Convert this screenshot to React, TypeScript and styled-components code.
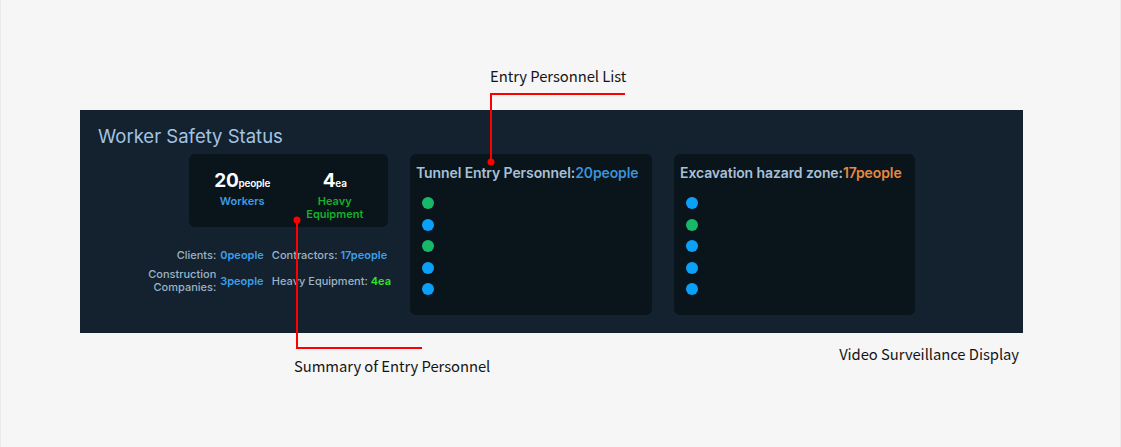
import React from "react";
import styled, { createGlobalStyle } from "styled-components";

const GlobalStyle = createGlobalStyle`
  html, body {
    margin: 0;
    padding: 0;
    background: #f6f6f6;
  }
`;

const Frame = styled.div`
  position: relative;
  width: 1121px;
  height: 447px;
  box-sizing: border-box;
  padding: 110px 0 0 80px;
  background: #f6f6f6;
  border-left: 1px solid #ebebeb;
  border-right: 1px solid #ebebeb;
  overflow: hidden;
`;

const Panel = styled.div`
  width: 943px;
  height: 223px;
  box-sizing: border-box;
  margin-left: -1px;
  padding: 15px 0 0 18px;
  background: #13222e;
  font-family: Inter, "Noto Sans", sans-serif;
`;

const PanelTitle = styled.div`
  font-size: 18.5px;
  line-height: 22px;
  font-weight: 400;
  color: #a3c4e2;
`;

const Row = styled.div`
  display: flex;
  gap: 22px;
  margin-top: 7px;
  padding-left: 91px;
`;

const LeftColumn = styled.div`
  width: 199px;
  display: flex;
  flex-direction: column;
  align-items: flex-end;
`;

const SummaryCard = styled.div`
  width: 199px;
  height: 73px;
  box-sizing: border-box;
  padding: 17px 7px 0;
  background: #0a141b;
  border-radius: 6px;
  display: grid;
  grid-template-columns: 1fr 1fr;
`;

const Metric = styled.div`
  display: flex;
  flex-direction: column;
  align-items: center;
  text-align: center;
`;

const MetricValue = styled.div`
  color: #ffffff;
  font-size: 19px;
  line-height: 20px;
  font-weight: 700;
  letter-spacing: -0.3px;
  small {
    font-size: 10px;
    font-weight: 600;
    letter-spacing: -0.2px;
  }
`;

const MetricLabel = styled.div<{ $tone: string }>`
  margin-top: 2px;
  color: ${(p) => p.$tone};
  font-size: 11px;
  line-height: 13px;
  font-weight: 600;
`;

const Stats = styled.div`
  margin-top: 22px;
  margin-right: -3px;
  display: grid;
  grid-template-columns: 72px auto auto;
  column-gap: 4px;
  row-gap: 6px;
  align-items: center;
  font-size: 11px;
  line-height: 13px;
  font-weight: 500;
  color: #9cb2c6;
  white-space: nowrap;
`;

const StatLabel = styled.div`
  text-align: right;
  white-space: normal;
`;

const StatValue = styled.span<{ $tone: string }>`
  color: ${(p) => p.$tone};
  font-weight: 600;
`;

const StatPair = styled.div`
  padding-left: 4px;
`;

const ListCard = styled.div<{ $width: number }>`
  width: ${(p) => p.$width}px;
  height: 161px;
  box-sizing: border-box;
  padding: 11px 6px 0;
  background: #0a141b;
  border-radius: 6px;
`;

const ListTitle = styled.div`
  font-size: 14px;
  line-height: 16px;
  font-weight: 600;
  color: #a7c0d8;
  letter-spacing: -0.1px;
  white-space: nowrap;
`;

const ListCount = styled.span<{ $tone: string }>`
  color: ${(p) => p.$tone};
`;

const DotList = styled.div`
  margin-top: 16px;
  padding-left: 6px;
  display: flex;
  flex-direction: column;
  gap: 9.5px;
`;

const Dot = styled.span<{ $tone: string }>`
  display: block;
  width: 12px;
  height: 12px;
  border-radius: 50%;
  background: ${(p) => p.$tone};
`;

const Caption = styled.div`
  width: 938px;
  margin-top: 11px;
  text-align: right;
  font-family: "Noto Sans CJK KR", "Noto Sans", sans-serif;
  font-size: 14.8px;
  line-height: 20px;
  color: #151515;
  letter-spacing: -0.05px;
`;

const Note = styled.div<{ $x: number; $y: number }>`
  position: absolute;
  left: ${(p) => p.$x}px;
  top: ${(p) => p.$y}px;
  font-family: "Noto Sans CJK KR", "Noto Sans", sans-serif;
  font-size: 14.8px;
  line-height: 20px;
  color: #151515;
  letter-spacing: -0.05px;
  white-space: nowrap;
`;

const Leader = styled.svg`
  position: absolute;
  left: 0;
  top: 0;
  pointer-events: none;
`;

const GREEN = "#18b86a";
const BLUE = "#0aa2f8";

const tunnelDots = [GREEN, BLUE, GREEN, BLUE, BLUE];
const hazardDots = [BLUE, GREEN, BLUE, BLUE, BLUE];

export default function App() {
  return (
    <>
      <GlobalStyle />
      <Frame>
        <Panel>
          <PanelTitle>Worker Safety Status</PanelTitle>
          <Row>
            <LeftColumn>
              <SummaryCard>
                <Metric>
                  <MetricValue>
                    20<small>people</small>
                  </MetricValue>
                  <MetricLabel $tone="#3b9ee8">Workers</MetricLabel>
                </Metric>
                <Metric>
                  <MetricValue>
                    4<small>ea</small>
                  </MetricValue>
                  <MetricLabel $tone="#16b02a">
                    Heavy
                    <br />
                    Equipment
                  </MetricLabel>
                </Metric>
              </SummaryCard>
              <Stats>
                <StatLabel>Clients:</StatLabel>
                <StatValue $tone="#3b9ee8">0people</StatValue>
                <StatPair>
                  Contractors: <StatValue $tone="#3b9ee8">17people</StatValue>
                </StatPair>
                <StatLabel>Construction Companies:</StatLabel>
                <StatValue $tone="#3b9ee8">3people</StatValue>
                <StatPair>
                  Heavy Equipment: <StatValue $tone="#2ee81e">4ea</StatValue>
                </StatPair>
              </Stats>
            </LeftColumn>
            <ListCard $width={242}>
              <ListTitle>
                Tunnel Entry Personnel:<ListCount $tone="#3a93d8">20people</ListCount>
              </ListTitle>
              <DotList>
                {tunnelDots.map((c, i) => (
                  <Dot key={i} $tone={c} />
                ))}
              </DotList>
            </ListCard>
            <ListCard $width={241}>
              <ListTitle>
                Excavation hazard zone:<ListCount $tone="#e5893f">17people</ListCount>
              </ListTitle>
              <DotList>
                {hazardDots.map((c, i) => (
                  <Dot key={i} $tone={c} />
                ))}
              </DotList>
            </ListCard>
          </Row>
        </Panel>
        <Caption>Video Surveillance Display</Caption>

        <Note $x={489} $y={66}>Entry Personnel List</Note>
        <Note $x={293} $y={356}>Summary of Entry Personnel</Note>
        <Leader width="1121" height="447" viewBox="0 0 1121 447">
          <polyline points="624,94 490,94 490,162" fill="none" stroke="#ff0000" strokeWidth="2" />
          <circle cx="490" cy="162" r="3.5" fill="#ff0000" />
          <polyline points="296,220 296,348 421,348" fill="none" stroke="#ff0000" strokeWidth="2" />
          <circle cx="296" cy="220" r="3.5" fill="#ff0000" />
        </Leader>
      </Frame>
    </>
  );
}
